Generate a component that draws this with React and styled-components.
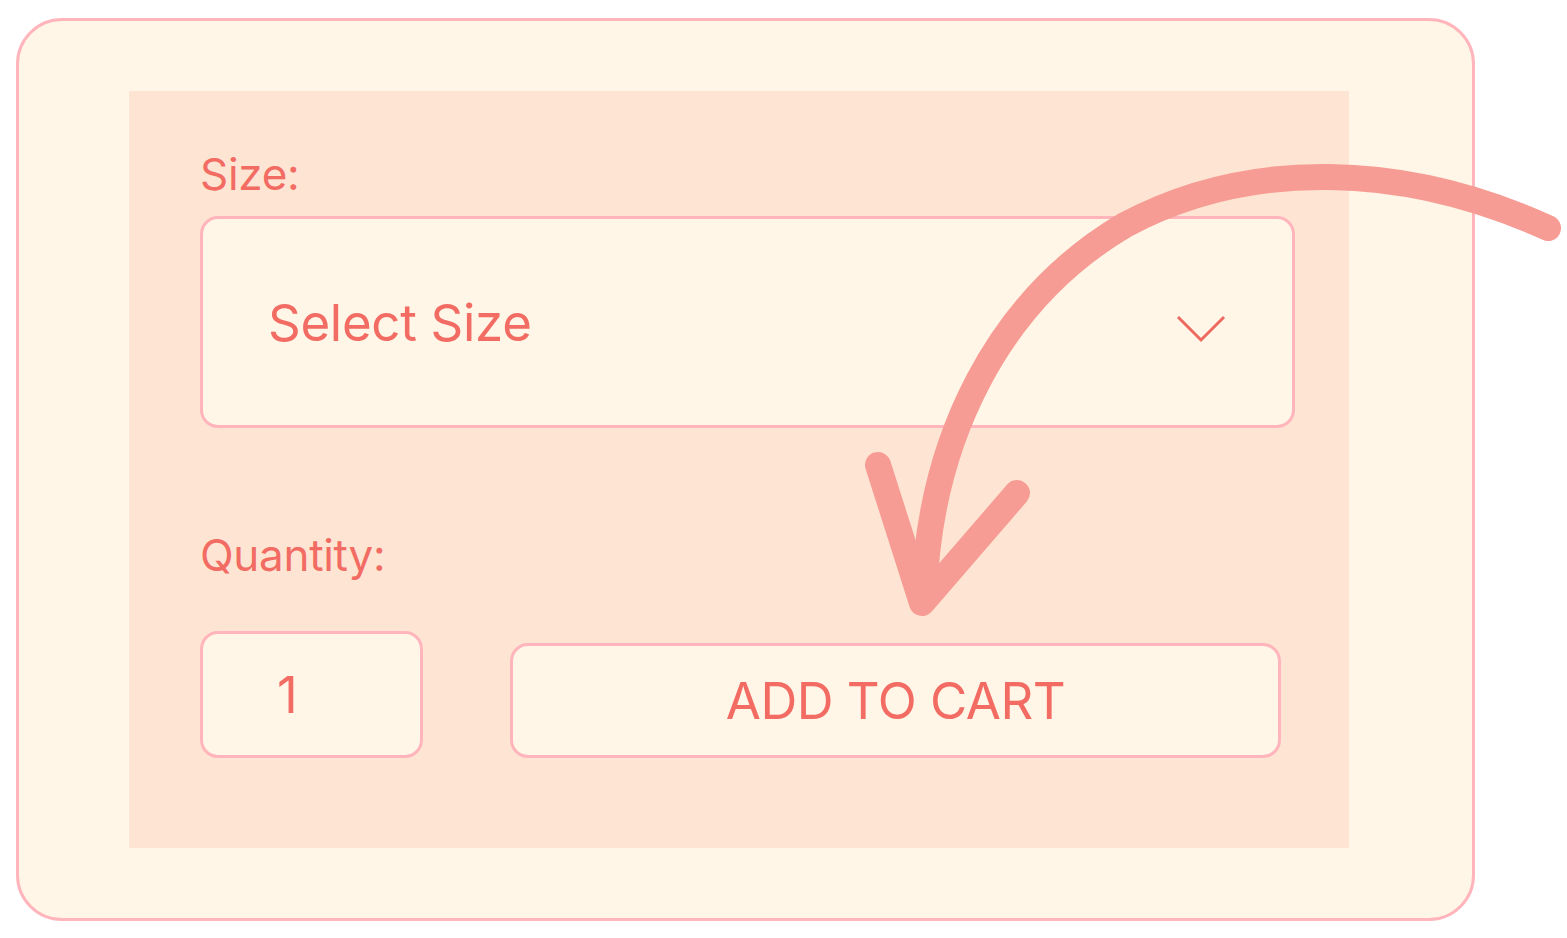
import React from 'react';
import styled, { createGlobalStyle } from 'styled-components';

const GlobalStyle = createGlobalStyle`
  html, body {
    margin: 0;
    padding: 0;
    background: #ffffff;
  }
  body {
    font-family: Inter, 'Noto Sans', sans-serif;
  }
`;

const Page = styled.div`
  position: relative;
  width: 1567px;
  height: 938px;
  padding: 18px 0 0 16px;
  box-sizing: border-box;
  overflow: hidden;
`;

const Card = styled.div`
  width: 1459px;
  height: 903px;
  box-sizing: border-box;
  border: 3px solid #ffb5bb;
  border-radius: 46px;
  background: #fff6e7;
  padding: 70px 123px 0 110px;
`;

const Panel = styled.div`
  height: 757px;
  background: #fee5d3;
  padding: 56px 54px 0 71px;
  box-sizing: border-box;
  display: flex;
  flex-direction: column;
`;

const Label = styled.div`
  font-size: 44px;
  line-height: 54px;
  color: #f26c64;
  letter-spacing: -0.3px;
  margin-bottom: ${p => p.gap}px;
`;

const Select = styled.div`
  height: 212px;
  box-sizing: border-box;
  border: 3px solid #ffb5bb;
  border-radius: 18px;
  background: #fff6e7;
  display: flex;
  align-items: center;
  justify-content: space-between;
  padding: 0 66px 0 65px;
  margin-bottom: 100px;
`;

const SelectText = styled.span`
  font-size: 51px;
  color: #f26c64;
  letter-spacing: -0.3px;
`;

const Chevron = styled.svg`
  margin-top: 14px;
`;

const Row = styled.div`
  display: flex;
  align-items: flex-end;
  gap: 87px;
`;

const Box = styled.div`
  width: ${p => p.w}px;
  height: ${p => p.h}px;
  box-sizing: border-box;
  border: 3px solid #ffb5bb;
  border-radius: 18px;
  background: #fff6e7;
  display: flex;
  align-items: center;
  justify-content: ${p => (p.left ? 'flex-start' : 'center')};
  padding-left: ${p => (p.left ? '74px' : '0')};
  font-size: 51px;
  color: #f26c64;
  letter-spacing: -0.5px;
`;

const Arrow = styled.svg`
  position: absolute;
  left: 0;
  top: 0;
  pointer-events: none;
`;

export default function App() {
  return (
    <>
      <GlobalStyle />
      <Page>
        <Card>
          <Panel>
            <Label gap={15}>Size:</Label>
            <Select>
              <SelectText>Select Size</SelectText>
              <Chevron width="50" height="30" viewBox="0 0 50 30">
                <path d="M2 3 L25 26 L48 3" fill="none" stroke="#ee6a60" strokeWidth="3" />
              </Chevron>
            </Select>
            <Label gap={49}>Quantity:</Label>
            <Row>
              <Box w={223} h={127} left>1</Box>
              <Box w={771} h={115}>ADD TO CART</Box>
            </Row>
          </Panel>
        </Card>
        <Arrow width="1567" height="938" viewBox="0 0 1567 938">
          <g fill="none" stroke="#f79c94" strokeWidth="26" strokeLinecap="round" strokeLinejoin="round">
            <path d="M1548 228 C1405 163 1250 158 1125 225 C998 300 928 440 924 600" />
            <path d="M878 465 L922 603 L1017 493" />
          </g>
        </Arrow>
      </Page>
    </>
  );
}
